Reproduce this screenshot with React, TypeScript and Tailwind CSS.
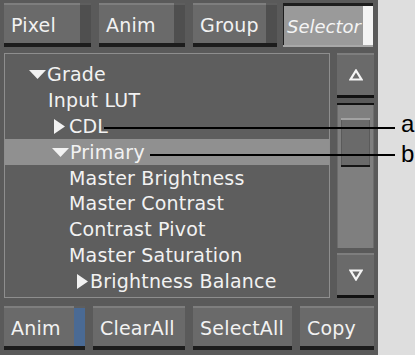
import React from 'react';

const font = { fontFamily: '"DejaVu Sans", "Liberation Sans", sans-serif' };

type BtnProps = {
  label: string;
  w: string;
  strip?: string;
};

// raised grey button with an optional status strip on the right
const PanelButton = ({ label, w, strip }: BtnProps) => (
  <div className={`flex flex-col ${w}`}>
    <div className="flex h-[40px]">
      <div className="flex flex-1 items-center border-t-2 border-[#7e7e7e] bg-[#6a6a6a] pl-[7px] pt-[3px] text-[19px] tracking-[0.2px] text-[#f2f2f2]">
        {label}
      </div>
      {strip && <div className={`w-[11px] border-t-2 border-[#5e5e5e] ${strip}`} />}
    </div>
    <div className="h-[4px] bg-[#1c1c1c]" />
  </div>
);

const DownTri = () => (
  <svg width="17" height="9" viewBox="0 0 17 9" className="shrink-0">
    <polygon points="0,0 17,0 8.5,9" fill="#f2f2f2" />
  </svg>
);

const RightTri = () => (
  <svg width="11" height="15" viewBox="0 0 11 15" className="shrink-0">
    <polygon points="0,0 11,7.5 0,15" fill="#f2f2f2" />
  </svg>
);

const rows = [
  { pl: 'pl-[24px]', icon: 'down', gap: 'gap-[1px]', label: 'Grade' },
  { pl: 'pl-[43px]', icon: '', gap: '', label: 'Input LUT' },
  { pl: 'pl-[49px]', icon: 'right', gap: 'gap-[4px]', label: 'CDL' },
  { pl: 'pl-[47px]', icon: 'down', gap: 'gap-[1px]', label: 'Primary', active: true },
  { pl: 'pl-[64px]', icon: '', gap: '', label: 'Master Brightness' },
  { pl: 'pl-[64px]', icon: '', gap: '', label: 'Master Contrast' },
  { pl: 'pl-[64px]', icon: '', gap: '', label: 'Contrast Pivot' },
  { pl: 'pl-[64px]', icon: '', gap: '', label: 'Master Saturation' },
  { pl: 'pl-[72px]', icon: 'right', gap: 'gap-[2px]', label: 'Brightness Balance' },
];

export default function App() {
  return (
    <div className="relative flex h-[355px] w-[415px] overflow-hidden bg-[#dedede]" style={font}>
      <div className="flex h-full w-[378px] flex-col bg-[#5a5a5a] pl-[4px] pt-[3px]">
        {/* top tabs */}
        <div className="flex h-[44px]">
          <PanelButton label="Pixel" w="w-[87px]" strip="bg-[#4f4f4f]" />
          <div className="w-[8px]" />
          <PanelButton label="Anim" w="w-[86px]" strip="bg-[#4f4f4f]" />
          <div className="w-[8px]" />
          <PanelButton label="Group" w="w-[84px]" strip="bg-[#4f4f4f]" />
          <div className="w-[6px]" />
          <div className="flex w-[90px] flex-col">
            <div className="flex h-[42px] border-l border-t-[3px] border-[#1e1e1e]">
              <div className="flex flex-1 items-center bg-[#9a9a9a] pl-[3px] pt-[2px] text-[18px] italic text-[#f4f4f4]">
                Selector
              </div>
              <div className="w-[10px] bg-[#f4f4f4]" />
            </div>
            <div className="h-[2px] bg-[#a8a8a8]" />
          </div>
        </div>

        {/* tree and scrollbar */}
        <div className="mt-[6px] flex h-[245px]">
          <div className="flex w-[326px] flex-col border border-[#8e8e8e] bg-[#5e5e5e] pt-[8px]">
            {rows.map((r) => (
              <div
                key={r.label}
                className={`flex h-[25.8px] items-center ${r.gap} ${r.pl} ${r.active ? 'bg-[#909090]' : ''} text-[19px] leading-none tracking-[0.2px] text-[#f2f2f2]`}
              >
                {r.icon === 'down' && <DownTri />}
                {r.icon === 'right' && <RightTri />}
                <span>{r.label}</span>
              </div>
            ))}
          </div>

          <div className="ml-[7px] flex w-[37px] flex-col">
            <div className="flex h-[42px] items-center justify-center border-t-2 border-[#7e7e7e] bg-[#6a6a6a]">
              <svg width="14" height="12" viewBox="0 0 14 12">
                <polygon points="7,1.5 12.5,10.5 1.5,10.5" fill="none" stroke="#f4f4f4" strokeWidth="2.2" strokeLinejoin="miter" />
              </svg>
            </div>
            <div className="h-[3px] bg-[#111]" />
            <div className="h-[5px]" />
            <div className="h-[2px] bg-[#111]" />
            <div className="flex h-[145px] flex-col border-x border-[#6c6c6c] bg-[#7f7f7f] px-[3px] pt-[13px]">
              <div className="flex h-[49px] flex-col border-t-2 border-[#a2a2a2] bg-[#6a6a6a]">
                <div className="flex-1 border-x border-[#5a5a5a]" />
                <div className="h-[2px] bg-[#151515]" />
              </div>
            </div>
            <div className="h-[5px]" />
            <div className="flex h-[42px] items-center justify-center border-t-2 border-[#7e7e7e] bg-[#6a6a6a]">
              <svg width="14" height="12" viewBox="0 0 14 12">
                <polygon points="7,10.5 12.5,1.5 1.5,1.5" fill="none" stroke="#f4f4f4" strokeWidth="2.2" strokeLinejoin="miter" />
              </svg>
            </div>
            <div className="h-[3px] bg-[#111]" />
          </div>
        </div>

        {/* bottom buttons */}
        <div className="mt-[8px] flex h-[44px]">
          <PanelButton label="Anim" w="w-[81px]" strip="bg-[#4a6a94]" />
          <div className="w-[8px]" />
          <PanelButton label="ClearAll" w="w-[92px]" />
          <div className="w-[8px]" />
          <PanelButton label="SelectAll" w="w-[99px]" />
          <div className="w-[8px]" />
          <PanelButton label="Copy" w="w-[74px]" />
        </div>
      </div>

      {/* callouts */}
      <div className="absolute left-[104px] top-[127px] h-[2px] w-[291px] bg-black" />
      <div className="absolute left-[150px] top-[154px] h-[2px] w-[245px] bg-black" />
      <div
        className="absolute left-[401px] top-[112px] text-[24px] leading-none text-black"
        style={{ fontFamily: '"Liberation Sans", Arial, sans-serif' }}
      >
        a
      </div>
      <div
        className="absolute left-[401px] top-[142px] text-[24px] leading-none text-black"
        style={{ fontFamily: '"Liberation Sans", Arial, sans-serif' }}
      >
        b
      </div>
    </div>
  );
}
